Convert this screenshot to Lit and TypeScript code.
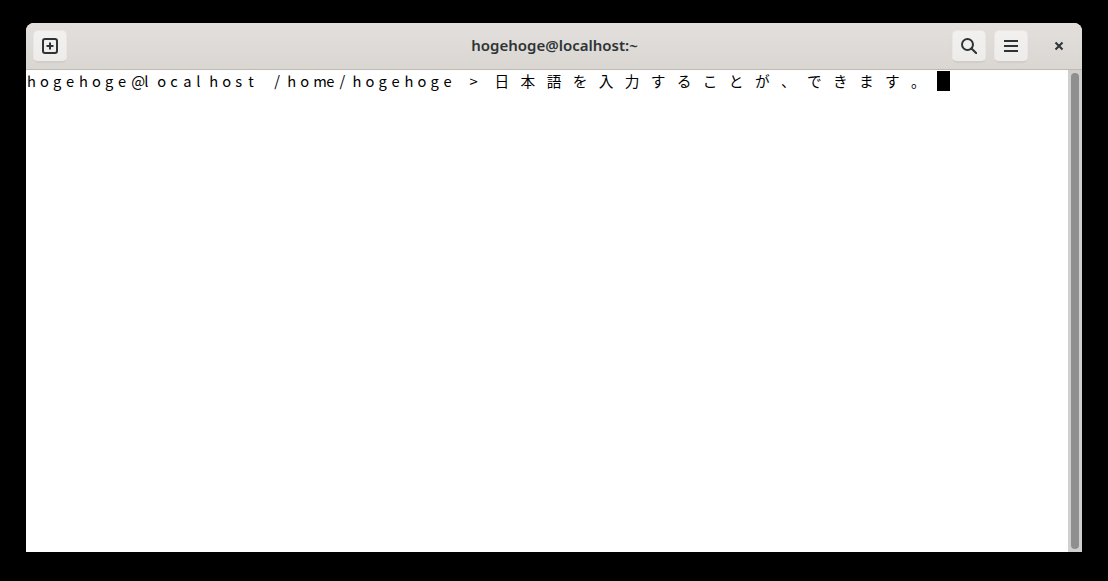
import { LitElement, html, css } from "lit";
import { customElement } from "lit/decorators.js";

const LINE = "hogehoge@localhost /home/hogehoge > 日本語を入力することが、できます。";

@customElement("app-root")
export class AppRoot extends LitElement {
  static styles = css`
    :host { display: block; width: 1108px; height: 581px; background: #000; padding: 23px 26px 29px; box-sizing: border-box; overflow: hidden; }
    .win { display: flex; flex-direction: column; height: 100%; border-radius: 8px 8px 0 0; overflow: hidden; background: #fff; }
    .bar { flex: none; height: 47px; box-sizing: border-box; display: grid; grid-template-columns: 1fr auto 1fr; align-items: center; padding: 0 6px 0 7px; background: linear-gradient(#e2dfdc, #dad7d3); border-bottom: 1px solid #c0bab3; }
    .btn { flex: none; width: 34px; height: 32px; box-sizing: border-box; display: flex; align-items: center; justify-content: center; border: 1px solid #e9e6e4; border-bottom-color: #d2cdc8; border-radius: 5px; background: linear-gradient(#f3f1f0, #eeecea); box-shadow: 0 1px 1px rgba(0,0,0,.05); color: #2e3436; }
    .title { text-align: center; font: 600 15px/20px "Noto Sans", "Open Sans", sans-serif; color: #2e3436; padding-bottom: 2px; }
    .right { display: flex; align-items: center; justify-content: flex-end; gap: 8px; }
    .close { width: 34px; height: 32px; margin-left: 6px; display: flex; align-items: center; justify-content: center; color: #2e3436; }
    .body { flex: 1; display: flex; min-height: 0; }
    .term { flex: 1; min-width: 0; }
    .line { display: grid; grid-template-columns: repeat(80, 13.02px); grid-auto-rows: 22px; font: 400 14.67px "Noto Sans CJK JP", "Noto Sans", sans-serif; color: #000; line-height: 22px; }
    .c { white-space: pre; padding-left: 1px; }
    .w { grid-column: span 2; padding-left: 0; }
    .cursor { background: #000; width: 13px; height: 20px; margin-top: 1px; }
    .sb { flex: none; width: 14px; background: #cfcfcd; display: flex; padding: 3px; box-sizing: border-box; }
    .thumb { flex: 1; background: #8f8f8f; border-radius: 4px; }
    svg { display: block; }
  `;

  private cell(ch: string) {
    const wide = ch.charCodeAt(0) > 0x2000;
    return html`<span class="c ${wide ? "w" : ""}">${ch}</span>`;
  }

  render() {
    return html`<div class="win">
      <div class="bar">
        <div class="btn">
          <svg width="16" height="16" viewBox="0 0 16 16" fill="none" stroke="currentColor"><rect x="1" y="1" width="14" height="14" rx="2" stroke-width="2"/><path d="M8 4.5v7M4.5 8h7" stroke-width="2"/></svg>
        </div>
        <div class="title">hogehoge@localhost:~</div>
        <div class="right">
          <div class="btn">
            <svg width="16" height="16" viewBox="0 0 16 16" fill="none" stroke="currentColor" stroke-width="2"><circle cx="6.5" cy="6.5" r="5.5"/><path d="M10.5 10.5l5 5" stroke-linecap="round"/></svg>
          </div>
          <div class="btn">
            <svg width="16" height="16" viewBox="0 0 16 16" fill="currentColor"><rect x="1" y="2" width="14" height="2"/><rect x="1" y="7" width="14" height="2"/><rect x="1" y="12" width="14" height="2"/></svg>
          </div>
          <div class="close">
            <svg width="10" height="10" viewBox="0 0 10 10" fill="none" stroke="currentColor" stroke-width="2"><path d="M1.5 1.5l7 7M8.5 1.5l-7 7"/></svg>
          </div>
        </div>
      </div>
      <div class="body">
        <div class="term">
          <div class="line">
            ${[...LINE].map((c) => this.cell(c))}
            <span class="cursor"></span>
          </div>
        </div>
        <div class="sb"><div class="thumb"></div></div>
      </div>
    </div>`;
  }
}
